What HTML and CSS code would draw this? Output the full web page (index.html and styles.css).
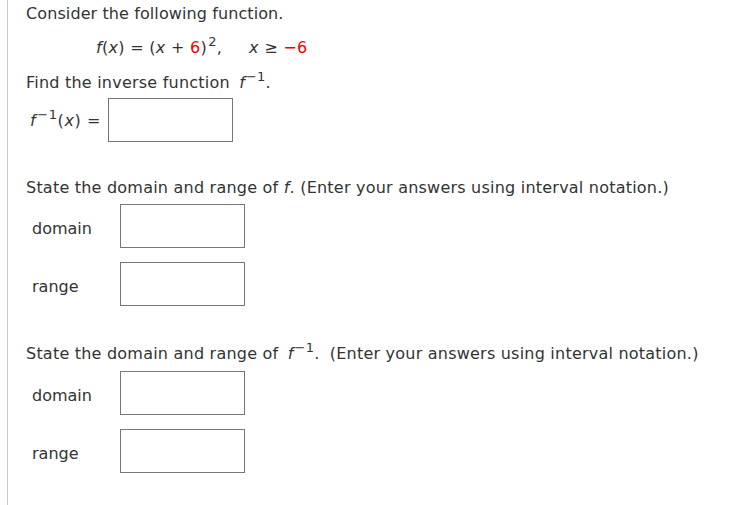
FILE: index.html
```html
<!DOCTYPE html>
<html>
<head>
<meta charset="utf-8">
<link rel="stylesheet" href="styles.css">
</head>
<body>
<div class="question">
  <p class="intro">Consider the following function.</p>
  <p class="formula"><span class="m">f</span>(<span class="m">x</span>) = (<span class="m">x</span> + <span class="red">6</span>)<sup>2</sup>,<span class="cond"><span class="m">x</span> ≥ <span class="red">−6</span></span></p>
  <p class="prompt">Find the inverse function <span class="m mf">f</span><sup>−1</sup>.</p>
  <div class="answer-row">
    <span class="label"><span class="m">f</span><sup>−1</sup>(<span class="m">x</span>) =</span>
    <span class="box"></span>
  </div>
  <p class="prompt section">State the domain and range of <span class="m">f</span>. (Enter your answers using interval notation.)</p>
  <div class="field"><span class="flabel">domain</span><span class="box"></span></div>
  <div class="field"><span class="flabel">range</span><span class="box"></span></div>
  <p class="prompt section2">State the domain and range of <span class="m mf">f</span><sup>−1</sup>. <span class="gap"></span>(Enter your answers using interval notation.)</p>
  <div class="field"><span class="flabel">domain</span><span class="box"></span></div>
  <div class="field"><span class="flabel">range</span><span class="box"></span></div>
</div>
</body>
</html>
```
FILE: styles.css
```css
html, body {
  margin: 0;
  padding: 0;
  background: #fff;
}
body {
  font-family: "DejaVu Sans", Verdana, sans-serif;
  font-size: 16px;
  color: #333;
}
.question {
  margin-left: 7px;
  border-left: 1px solid #ccc;
  min-height: 505px;
  box-sizing: border-box;
  padding: 4px 0 0 18px;
}
p { margin: 0; line-height: 20px; }
.prompt { letter-spacing: 0.22px; }
.intro { letter-spacing: 0.1px; margin-bottom: 14px; }
.m { font-style: italic; }
.mf { margin-left: 4px; }
.gap { display: inline-block; width: 5px; }
.red { color: #e00; }
sup { font-size: 13px; line-height: 0; vertical-align: 7px; margin-left: 1px; }
.formula { padding-left: 70px; margin-bottom: 15px; letter-spacing: 0.3px; }
.cond { margin-left: 27px; }
.answer-row {
  display: flex;
  align-items: center;
  margin-top: 5px;
  padding-left: 4px;
}
.label { width: 78px; letter-spacing: 0.6px; }
.box {
  display: block;
  width: 123px;
  height: 42px;
  border: 1px solid #777;
  background: #fff;
}
.section { margin-top: 36px; margin-bottom: 6px; }
.section2 { margin-top: 38px; margin-bottom: 7px; }
.field {
  display: flex;
  align-items: center;
  padding-left: 6px;
  margin-bottom: 14px;
}
.flabel { width: 88px; padding-top: 4px; }
```
